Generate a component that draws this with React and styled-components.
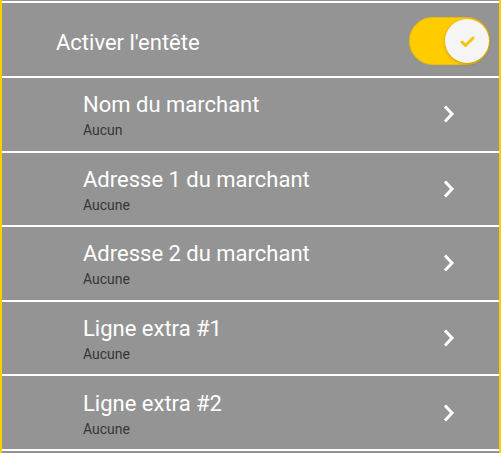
import React, { useState } from 'react'
import styled, { createGlobalStyle } from 'styled-components'

const Global = createGlobalStyle`
  html, body {
    margin: 0;
    padding: 0;
    background: #949494;
  }
  body {
    font-family: Roboto, "Noto Sans", sans-serif;
  }
`

const items = [
  { id: 1, title: 'Nom du marchant', value: 'Aucun' },
  { id: 2, title: 'Adresse 1 du marchant', value: 'Aucune' },
  { id: 3, title: 'Adresse 2 du marchant', value: 'Aucune' },
  { id: 4, title: 'Ligne extra #1', value: 'Aucune' },
  { id: 5, title: 'Ligne extra #2', value: 'Aucune' },
]

export default function App() {
  const [enabled, setEnabled] = useState(true)
  return (
    <>
      <Global />
      <Panel>
        <Header>
          <HeaderLabel>Activer l'entête</HeaderLabel>
          <Toggle on={enabled} onClick={() => setEnabled(!enabled)}>
            <Knob on={enabled}>
              {enabled && (
                <svg width="19" height="19" viewBox="0 0 24 24">
                  <path d="M5 12.5l4.5 4.5L19 7.5" fill="none" stroke="#f5c400" strokeWidth="3.6" strokeLinecap="round" strokeLinejoin="round" />
                </svg>
              )}
            </Knob>
          </Toggle>
        </Header>
        {items.map((item) => (
          <Row key={item.id}>
            <Texts>
              <Title>{item.title}</Title>
              <Sub>{item.value}</Sub>
            </Texts>
            <Chevron width="14" height="20" viewBox="0 0 14 20">
              <polyline points="3,2.5 10,10 3,17.5" fill="none" stroke="#fff" strokeWidth="3" />
            </Chevron>
          </Row>
        ))}
      </Panel>
    </>
  )
}

const Panel = styled.div`
  display: flex;
  flex-direction: column;
  height: 453px;
  box-sizing: border-box;
  padding-top: 1px;
  border-left: 2px solid #ffcc00;
  border-right: 2px solid #ffcc00;
  background: #949494;
  overflow: hidden;
`

const Header = styled.div`
  display: flex;
  align-items: center;
  justify-content: space-between;
  height: 77px;
  box-sizing: border-box;
  padding: 3px 9px 0 54px;
  border-top: 2px solid #fff;
  border-bottom: 2px solid #fff;
  flex-shrink: 0;
`

const HeaderLabel = styled.span`
  color: #fff;
  font-size: 22px;
  margin-top: 3px;
`

const Toggle = styled.button`
  display: flex;
  align-items: center;
  justify-content: ${(p) => (p.on ? 'flex-end' : 'flex-start')};
  width: 81px;
  height: 48px;
  padding: 0 1px;
  border: none;
  border-radius: 24px;
  background: ${(p) => (p.on ? '#ffcc00' : '#bdbdbd')};
  box-shadow: inset 0 0 0 1px rgba(200, 160, 0, 0.35);
  cursor: pointer;
`

const Knob = styled.span`
  display: flex;
  align-items: center;
  justify-content: center;
  width: 44px;
  height: 44px;
  border-radius: 50%;
  background: #f5f5f5;
  box-shadow: 0 1px 3px rgba(0, 0, 0, 0.25);
`

const Row = styled.div`
  display: flex;
  align-items: center;
  justify-content: space-between;
  height: 74.6px;
  box-sizing: border-box;
  padding: 2px 43px 0 81px;
  border-bottom: 2px solid #fff;
  flex-shrink: 0;
`

const Texts = styled.div`
  display: flex;
  flex-direction: column;
  gap: 2px;
`

const Title = styled.span`
  color: #fff;
  font-size: 22px;
  line-height: 28px;
`

const Sub = styled.span`
  color: #363636;
  font-size: 14px;
  line-height: 18px;
`

const Chevron = styled.svg`
  display: block;
  margin-top: -2px;
`
